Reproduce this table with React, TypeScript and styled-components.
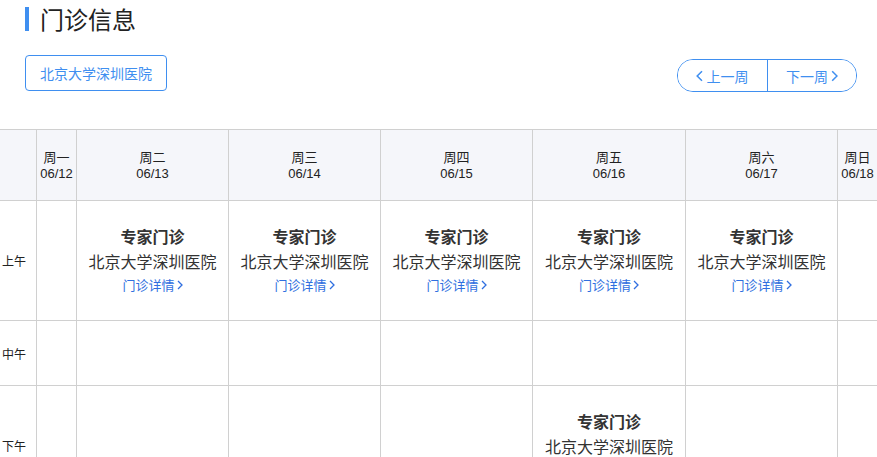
import React from "react";
import styled, { createGlobalStyle } from "styled-components";

const Global = createGlobalStyle`
  html, body { margin: 0; padding: 0; background: #fff; }
  body { font-family: "Liberation Sans", Arial, "Noto Sans CJK SC", sans-serif; color: #333; overflow: hidden; }
`;

const BLUE = "#3f8ff0";

const Page = styled.div`
  width: 877px;
  height: 457px;
  overflow: hidden;
`;

const Top = styled.div`
  padding: 6px 20px 0 25px;
`;

const Title = styled.h1`
  margin: 0;
  display: flex;
  align-items: center;
  gap: 11px;
  font-family: "Noto Sans CJK SC", sans-serif;
  font-weight: 400;
  font-size: 24px;
  line-height: 26px;
  color: #222;
  &::before {
    content: "";
    width: 4px;
    height: 24px;
    background: ${BLUE};
  }
`;

const ToolRow = styled.div`
  margin-top: 23px;
  display: flex;
  justify-content: space-between;
  align-items: flex-start;
`;

const HospitalButton = styled.button`
  height: 36px;
  width: 142px;
  border: 1px solid ${BLUE};
  border-radius: 4px;
  background: #fff;
  color: ${BLUE};
  font-family: "Noto Sans CJK SC", sans-serif;
  font-size: 14px;
  padding: 0;
  cursor: pointer;
`;

const WeekNav = styled.div`
  margin-top: 4px;
  display: flex;
  height: 31px;
  border: 1px solid ${BLUE};
  border-radius: 16px;
  overflow: hidden;
`;

const NavButton = styled.button<{ $first?: boolean }>`
  width: 89px;
  border: none;
  border-left: ${(p) => (p.$first ? "none" : `1px solid ${BLUE}`)};
  background: #fff;
  color: ${BLUE};
  font-family: "Noto Sans CJK SC", sans-serif;
  font-size: 14px;
  display: flex;
  align-items: center;
  justify-content: center;
  gap: 3px;
  padding: 0;
  cursor: pointer;
`;

const Grid = styled.div`
  margin-top: 37px;
  display: grid;
  grid-template-columns: 36px 40px 152px 152px 152px 153px 152px 40px;
  grid-template-rows: 71px 120px 65px 120px;
  border-top: 1px solid #d0d0d0;
  width: max-content;
`;

const HeadCell = styled.div<{ $label?: boolean }>`
  background: #f5f6fa;
  border-left: ${(p) => (p.$label ? "none" : "1px solid #d0d0d0")};
  border-bottom: 1px solid #d0d0d0;
  display: flex;
  flex-direction: column;
  align-items: center;
  justify-content: center;
  padding-top: 1px;
  font-size: 13px;
  line-height: 16px;
  color: #222;
  font-family: "Liberation Sans", "Noto Sans CJK SC", sans-serif;
`;

const LabelCell = styled.div`
  border-bottom: 1px solid #d0d0d0;
  display: flex;
  align-items: center;
  padding-left: 2px;
  font-family: "Noto Sans CJK SC", sans-serif;
  font-size: 12px;
  color: #222;
`;

const Cell = styled.div`
  border-left: 1px solid #d0d0d0;
  border-bottom: 1px solid #d0d0d0;
  display: flex;
  flex-direction: column;
  align-items: center;
  padding-top: 23px;
  box-sizing: border-box;
  font-family: "Noto Sans CJK SC", sans-serif;
  white-space: nowrap;
  overflow: hidden;
`;

const ClinicType = styled.div`
  font-size: 16px;
  font-weight: 700;
  color: #333;
  line-height: 24px;
`;

const ClinicName = styled.div`
  font-size: 16px;
  color: #333;
  line-height: 26px;
`;

const DetailLink = styled.a`
  font-size: 13px;
  color: #2f6fe0;
  line-height: 22px;
  text-decoration: none;
  display: flex;
  align-items: center;
  gap: 2px;
`;

const Chevron = ({ dir, size = 10 }: { dir: "l" | "r"; size?: number }) => (
  <svg width={size * 0.6} height={size} viewBox="0 0 6 10" fill="none">
    <path
      d={dir === "l" ? "M5 1 L1 5 L5 9" : "M1 1 L5 5 L1 9"}
      stroke="currentColor"
      strokeWidth="1.3"
    />
  </svg>
);

const days = [
  { w: "周一", d: "06/12" },
  { w: "周二", d: "06/13" },
  { w: "周三", d: "06/14" },
  { w: "周四", d: "06/15" },
  { w: "周五", d: "06/16" },
  { w: "周六", d: "06/17" },
  { w: "周日", d: "06/18" },
];

const schedule: Record<string, boolean[]> = {
  上午: [false, true, true, true, true, true, false],
  中午: [false, false, false, false, false, false, false],
  下午: [false, false, false, false, true, false, false],
};

const Clinic = () => (
  <>
    <ClinicType>专家门诊</ClinicType>
    <ClinicName>北京大学深圳医院</ClinicName>
    <DetailLink href="#">
      门诊详情
      <Chevron dir="r" size={10} />
    </DetailLink>
  </>
);

export default function App() {
  return (
    <Page>
      <Global />
      <Top>
        <Title>门诊信息</Title>
        <ToolRow>
          <HospitalButton>北京大学深圳医院</HospitalButton>
          <WeekNav>
            <NavButton $first>
              <Chevron dir="l" size={12} />
              上一周
            </NavButton>
            <NavButton>
              下一周
              <Chevron dir="r" size={12} />
            </NavButton>
          </WeekNav>
        </ToolRow>
      </Top>
      <Grid>
        <HeadCell $label />
        {days.map((d) => (
          <HeadCell key={d.d}>
            <span>{d.w}</span>
            <span>{d.d}</span>
          </HeadCell>
        ))}
        {Object.entries(schedule).map(([label, slots]) => (
          <React.Fragment key={label}>
            <LabelCell>{label}</LabelCell>
            {slots.map((has, i) => (
              <Cell key={i}>{has && <Clinic />}</Cell>
            ))}
          </React.Fragment>
        ))}
      </Grid>
    </Page>
  );
}
